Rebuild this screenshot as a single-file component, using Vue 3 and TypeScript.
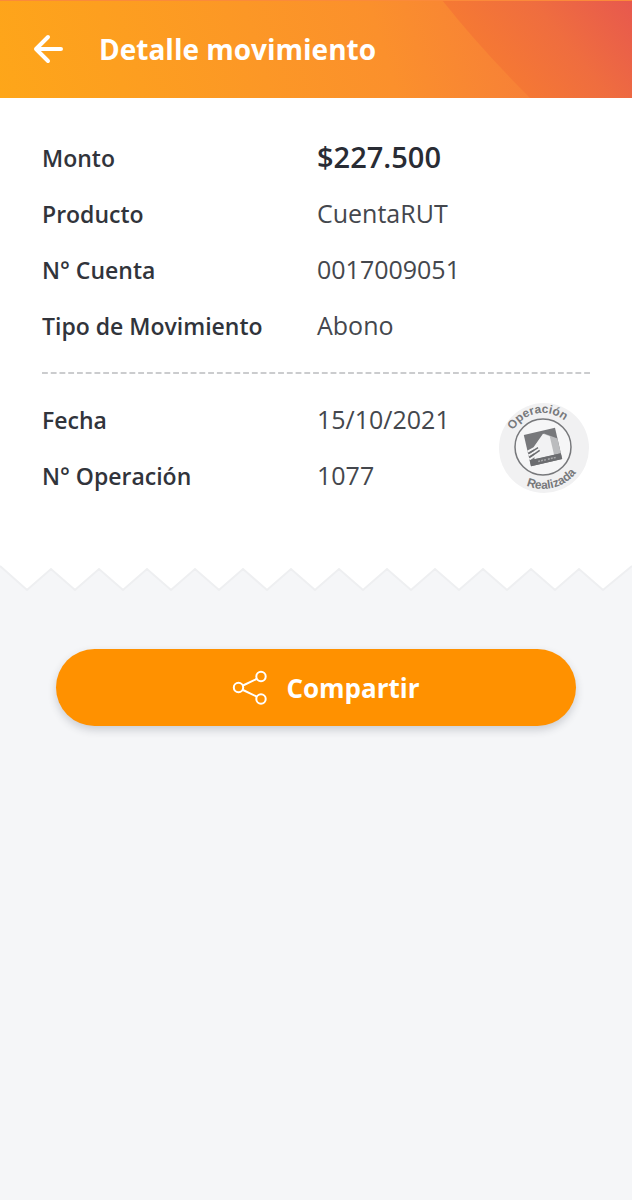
<script setup lang="ts">
interface Detail {
  label: string
  value: string
  strong?: boolean
}

const account: Detail[] = [
  { label: 'Monto', value: '$227.500', strong: true },
  { label: 'Producto', value: 'CuentaRUT' },
  { label: 'N° Cuenta', value: '0017009051' },
  { label: 'Tipo de Movimiento', value: 'Abono' },
]

const operation: Detail[] = [
  { label: 'Fecha', value: '15/10/2021' },
  { label: 'N° Operación', value: '1077' },
]

// Torn-paper edge: twelve teeth, 48 units apart, with taller ends.
const teeth = Array.from({ length: 12 }, (_, i) => `L${27 + i * 48} 25 L${51 + i * 48} 4`).join(' ')
const edge = `M0 1 ${teeth} L603 25 L632 1`
</script>

<template>
  <div class="screen">
    <header class="bar">
      <svg class="bar-bg" viewBox="0 0 632 98" preserveAspectRatio="none" aria-hidden="true">
        <defs>
          <linearGradient id="warm" gradientUnits="userSpaceOnUse" x1="0" y1="98" x2="520" y2="-60">
            <stop offset="0" stop-color="#fea619" />
            <stop offset="0.7" stop-color="#fb902c" />
            <stop offset="1" stop-color="#f67c3a" />
          </linearGradient>
          <linearGradient id="coral" gradientUnits="userSpaceOnUse" x1="510" y1="98" x2="632" y2="0">
            <stop offset="0" stop-color="#f67a32" />
            <stop offset="0.5" stop-color="#ef6d3f" />
            <stop offset="1" stop-color="#e7584e" />
          </linearGradient>
        </defs>
        <rect width="632" height="98" fill="url(#warm)" />
        <path d="M442 0H632V98H530Q480 48 442 0Z" fill="url(#coral)" />
        <rect width="632" height="1" fill="#fb8a3a" />
      </svg>
      <button class="back" type="button" aria-label="Volver">
        <svg viewBox="0 0 32 32" width="32" height="32" aria-hidden="true">
          <path d="M16 4L4 16L16 28M4 16H29" />
        </svg>
      </button>
      <h1>Detalle movimiento</h1>
    </header>

    <main>
      <section class="receipt">
        <dl>
          <div v-for="item in account" :key="item.label" class="row">
            <dt>{{ item.label }}</dt>
            <dd :class="{ strong: item.strong }">{{ item.value }}</dd>
          </div>
        </dl>
        <svg class="divider" viewBox="0 0 548 2" preserveAspectRatio="none" aria-hidden="true">
          <path d="M0 1H548" pathLength="564" />
        </svg>
        <div class="operation">
          <dl>
            <div v-for="item in operation" :key="item.label" class="row">
              <dt>{{ item.label }}</dt>
              <dd>{{ item.value }}</dd>
            </div>
          </dl>
          <svg class="stamp" viewBox="0 0 92 92" role="img" aria-label="Operación Realizada">
            <defs>
              <path id="arc-top" d="M11 45A34 34 0 0 1 79 45" />
              <path id="arc-bottom" d="M3 45A42 42 0 0 0 87 45" />
            </defs>
            <circle cx="46" cy="46" r="45" fill="#f1f1f2" />
            <circle cx="45" cy="45" r="28" fill="#f6f6f7" stroke="#77787b" stroke-width="1.500" />
            <g transform="rotate(-13 45 45)">
              <rect x="29" y="29" width="32" height="32" fill="#77787b" />
              <path d="M37 42L49 32L61 40V55H37Z" fill="#bbbcbe" />
              <path d="M36 43L48 32L54 36V55H34Z" fill="#f2f2f3" />
              <path d="M29 46L40 43M29 50L41 46M29 54L42 49" stroke="#f4f4f5" stroke-width="2" />
              <path d="M30 48L40 44.500M30 52L41 47.500" stroke="#6c6d70" stroke-width="1.500" />
              <rect x="29" y="55" width="32" height="6" fill="#6c6d70" />
              <path d="M37 58H45M47 58H55" stroke="#a7a8aa" stroke-width="1.500" stroke-dasharray="2 1" />
            </g>
            <text class="stamp-text" text-anchor="middle">
              <textPath href="#arc-top" startOffset="44%">Operación</textPath>
            </text>
            <text class="stamp-text" text-anchor="middle">
              <textPath href="#arc-bottom" startOffset="58%">Realizada</textPath>
            </text>
          </svg>
        </div>
      </section>
      <svg class="edge" viewBox="0 0 632 28" preserveAspectRatio="none" aria-hidden="true">
        <path :d="`${edge} V0 H0 Z`" fill="#fff" />
        <path :d="edge" fill="none" stroke="#eeeff1" stroke-width="2" />
      </svg>

      <div class="actions">
        <button class="share" type="button">
          <svg viewBox="0 0 36 36" width="36" height="36" aria-hidden="true">
            <circle cx="6.500" cy="17.500" r="4.700" />
            <circle cx="29" cy="6.500" r="4.700" />
            <circle cx="29" cy="29" r="4.700" />
            <path d="M11 15.500L24.500 9M11 20L24.500 26.500" />
          </svg>
          <span>Compartir</span>
        </button>
      </div>
    </main>
  </div>
</template>

<style>
body {
  background: #f5f6f8;
}
</style>

<style scoped>
.screen {
  min-height: 100vh;
  background: #f5f6f8;
  color: #31343b;
  font-family: "Open Sans", "Noto Sans", sans-serif;
}

.bar {
  position: relative;
  display: flex;
  align-items: center;
  gap: 35px;
  height: 98px;
  padding: 0 32px;
  color: #fff;
}

.bar-bg {
  position: absolute;
  inset: 0;
  width: 100%;
  height: 100%;
}

.back {
  position: relative;
  display: flex;
  padding: 0;
  border: 0;
  background: none;
  cursor: pointer;
}

.back path {
  fill: none;
  stroke: #fff;
  stroke-width: 4;
  stroke-linecap: round;
  stroke-linejoin: round;
}

h1 {
  position: relative;
  margin: 0;
  font-size: 28px;
  font-weight: 700;
  line-height: 40px;
}

.receipt {
  padding: 32px 42px 61px;
  background: #fff;
}

dl {
  flex: 1;
  margin: 0;
}

.row {
  display: flex;
  height: 56px;
}

dt {
  flex: 0 0 275px;
  font-size: 23px;
  font-weight: 600;
  line-height: 56px;
}

dd {
  margin: 0;
  color: #44474d;
  font-size: 25px;
  line-height: 54px;
}

dd.strong {
  color: #292c34;
  font-size: 29px;
  font-weight: 600;
}

.divider {
  display: block;
  width: 100%;
  height: 2px;
  margin: 18px 0;
}

.divider path {
  fill: none;
  stroke: #cbccce;
  stroke-width: 2;
  stroke-dasharray: 6 3;
}

.operation {
  display: flex;
  align-items: center;
}

.stamp {
  flex: none;
  width: 92px;
  height: 92px;
  overflow: visible;
}

.stamp-text {
  fill: #77787b;
  font-family: "Liberation Sans", sans-serif;
  font-size: 12px;
  font-weight: 700;
}

.edge {
  display: block;
  width: 100%;
  height: 28px;
}

.actions {
  padding: 56px;
}

.share {
  display: flex;
  align-items: center;
  justify-content: center;
  gap: 18px;
  width: 100%;
  height: 77px;
  padding: 0 0 0 20px;
  border: 0;
  border-radius: 39px;
  background: #ff9100;
  box-shadow: 0 4px 8px rgba(40, 45, 60, 0.2);
  color: #fff;
  font: 700 26px/40px "Open Sans", "Noto Sans", sans-serif;
  cursor: pointer;
}

.share svg {
  fill: none;
  stroke: #fff;
  stroke-width: 2;
}
</style>
